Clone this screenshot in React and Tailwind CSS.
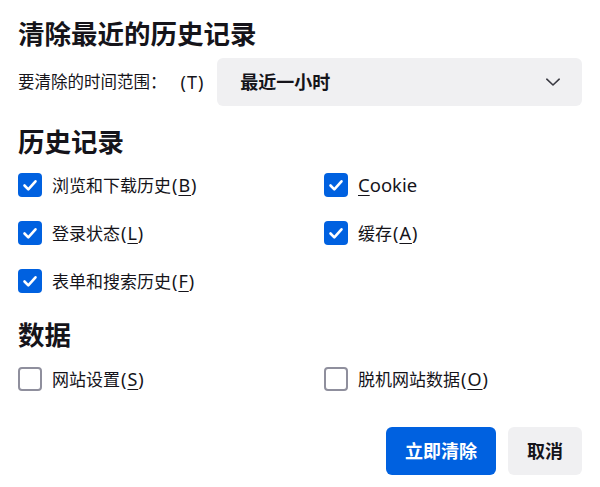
import React from "react";

const font = { fontFamily: '"Noto Sans", "Noto Sans CJK SC", sans-serif' };

function Box({ checked }) {
  if (checked) {
    return (
      <span className="flex h-[24px] w-[24px] shrink-0 items-center justify-center rounded-[4px] bg-[#0061e0]">
        <svg width="24" height="24" viewBox="0 0 24 24" fill="none">
          <path d="M6.5 12.5l3.8 3.8L17.5 8.3" stroke="white" strokeWidth="2.6" strokeLinecap="round" strokeLinejoin="round" />
        </svg>
      </span>
    );
  }
  return <span className="h-[24px] w-[24px] shrink-0 rounded-[4px] border-2 border-[#8f8f9d] bg-white" />;
}

function Item({ checked, label, accel, plain }) {
  return (
    <div className="flex h-[48px] items-center gap-[10px]">
      <Box checked={checked} />
      <span className="text-[17px] leading-none text-[#15141a]">
        {plain ? (
          <span className="text-[18.5px]">
            <span className="underline underline-offset-[3px]">{plain[0]}</span>
            {plain.slice(1)}
          </span>
        ) : (
          <>
            {label}
            <span className="ml-[1px] text-[18px] tracking-[1px]">
              (<span className="underline underline-offset-[3px]">{accel}</span>)
            </span>
          </>
        )}
      </span>
    </div>
  );
}

export default function App() {
  return (
    <div style={font} className="h-[487px] w-[600px] bg-white px-[18px] pt-[17px] text-[#15141a]">
      <h1 className="text-[26.5px] font-bold leading-[34px]">清除最近的历史记录</h1>

      <div className="mt-[7px] flex items-center gap-[13px]">
        <span className="flex items-center leading-none">
          <span className="text-[16.5px]">要清除的时间范围：</span>
          <span className="ml-[14px] text-[18px] tracking-[1px]">(T)</span>
        </span>
        <div className="flex h-[48px] flex-1 items-center justify-between rounded-[6px] bg-[#f0f0f2] pl-[23px] pr-[21px]">
          <span className="text-[18px] font-bold leading-none">最近一小时</span>
          <svg width="16" height="16" viewBox="0 0 16 16" fill="none">
            <path d="M1.8 5.2L8 11l6.2-5.8" stroke="#3a3a42" strokeWidth="1.6" strokeLinecap="round" strokeLinejoin="round" />
          </svg>
        </div>
      </div>

      <h2 className="mt-[19px] text-[26.5px] font-bold leading-[34px]">历史记录</h2>
      <div className="mt-[2px] grid grid-cols-[306px_1fr]">
        <Item checked label="浏览和下载历史" accel="B" />
        <Item checked plain="Cookie" />
        <Item checked label="登录状态" accel="L" />
        <Item checked label="缓存" accel="A" />
        <Item checked label="表单和搜索历史" accel="F" />
      </div>

      <h2 className="mt-[13px] text-[26.5px] font-bold leading-[34px]">数据</h2>
      <div className="mt-[3px] grid grid-cols-[306px_1fr]">
        <Item label="网站设置" accel="S" />
        <Item label="脱机网站数据" accel="O" />
      </div>

      <div className="mt-[24px] flex justify-end gap-[12px]">
        <button className="h-[48px] rounded-[6px] bg-[#0061e0] px-[19px] text-[18px] font-bold text-white">立即清除</button>
        <button className="h-[48px] rounded-[6px] bg-[#f0f0f2] px-[19px] text-[18px] font-bold text-[#15141a]">取消</button>
      </div>
    </div>
  );
}
